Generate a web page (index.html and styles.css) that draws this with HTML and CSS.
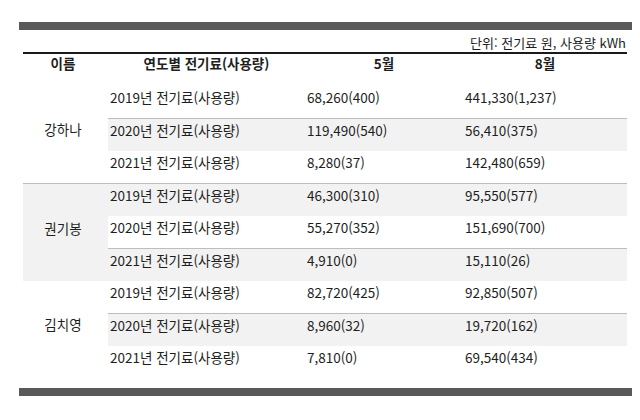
FILE: index.html
```html
<!DOCTYPE html>
<html lang="ko">
<head>
<meta charset="utf-8">
<link rel="stylesheet" href="styles.css">
</head>
<body>
<div class="sheet">
  <div class="bar"></div>
  <div class="unit">단위: 전기료 원, 사용량 kWh</div>
  <table class="bill">
    <colgroup>
      <col class="c-name"><col class="c-year"><col class="c-may"><col class="c-aug">
    </colgroup>
    <thead>
      <tr><th class="name">이름</th><th>연도별 전기료(사용량)</th><th>5월</th><th>8월</th></tr>
    </thead>
    <tbody>
      <tr><td class="name" rowspan="3">강하나</td><td>2019년 전기료(사용량)</td><td>68,260(400)</td><td>441,330(1,237)</td></tr>
      <tr><td>2020년 전기료(사용량)</td><td>119,490(540)</td><td>56,410(375)</td></tr>
      <tr><td>2021년 전기료(사용량)</td><td>8,280(37)</td><td>142,480(659)</td></tr>
      <tr><td class="name" rowspan="3">권기봉</td><td>2019년 전기료(사용량)</td><td>46,300(310)</td><td>95,550(577)</td></tr>
      <tr><td>2020년 전기료(사용량)</td><td>55,270(352)</td><td>151,690(700)</td></tr>
      <tr><td>2021년 전기료(사용량)</td><td>4,910(0)</td><td>15,110(26)</td></tr>
      <tr><td class="name" rowspan="3">김치영</td><td>2019년 전기료(사용량)</td><td>82,720(425)</td><td>92,850(507)</td></tr>
      <tr><td>2020년 전기료(사용량)</td><td>8,960(32)</td><td>19,720(162)</td></tr>
      <tr><td>2021년 전기료(사용량)</td><td>7,810(0)</td><td>69,540(434)</td></tr>
    </tbody>
  </table>
  <div class="bar bar-bottom"></div>
</div>
</body>
</html>
```

FILE: styles.css
```css
html, body {
  margin: 0;
  padding: 0;
  background: #ffffff;
}
body {
  font-family: "Noto Sans CJK KR", "Noto Sans", sans-serif;
  font-size: 13.5px;
  color: #1e1e1e;
}
.sheet {
  width: 613px;
  margin-left: 19px;
  padding-top: 22px;
}
.bar {
  height: 8px;
  background: #595959;
}
.bar-bottom {
  margin-top: 10px;
}
.unit {
  margin-left: 4px;
  width: 603px;
  padding-top: 4px;
  line-height: 18px;
  text-align: right;
  font-size: 13px;
}
.bill {
  margin-left: 4px;
  width: 604px;
  table-layout: fixed;
  border-collapse: separate;
  border-spacing: 0;
  border-top: 2px solid #1a1a1a;
}
.c-name { width: 85px; }
.c-year { width: 197px; }
.c-may { width: 158px; }
.c-aug { width: 164px; }
.bill th {
  font-weight: bold;
  text-align: center;
  line-height: 18px;
  padding: 0 0 13.5px;
}
.bill td {
  line-height: 18px;
  padding: 2px 2px 12.5px;
  vertical-align: top;
  text-align: left;
  white-space: nowrap;
}
.bill tbody tr:nth-child(even) td {
  background: #f2f2f2;
  border-top: 1px solid #bdbdbd;
  padding-bottom: 11.5px;
}
.bill td.name,
.bill th.name {
  text-align: center;
  vertical-align: middle;
  padding-left: 0;
  padding-right: 5px;
}
```
